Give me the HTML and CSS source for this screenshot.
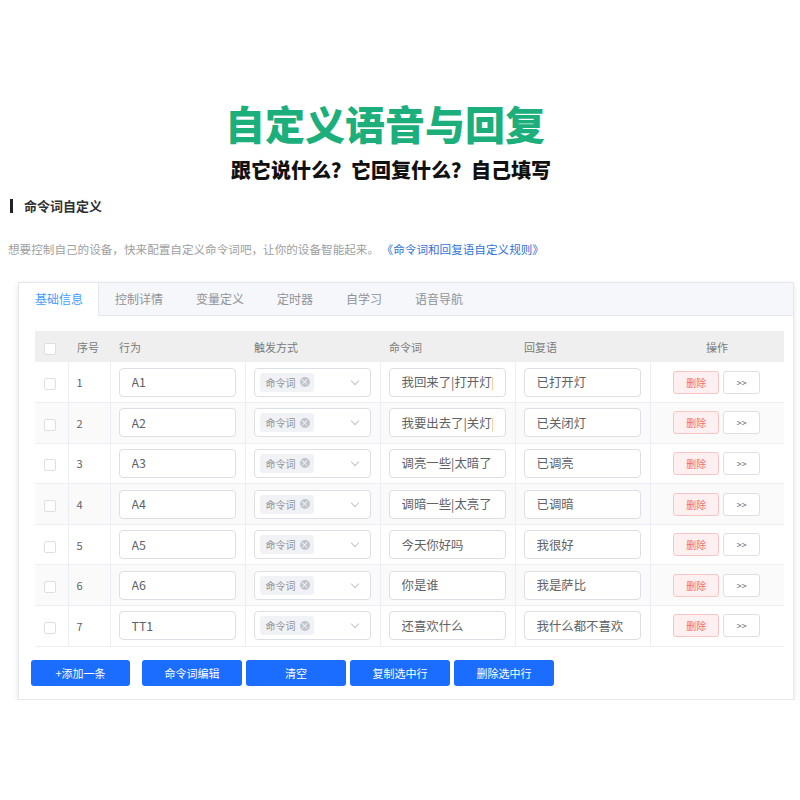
FILE: index.html
```html
<!DOCTYPE html>
<html lang="zh-CN">
  <head>
    <meta charset="UTF-8" />
    <title>自定义语音与回复</title>
    <link rel="stylesheet" href="styles.css">
  </head>
  <body>
    <div class="hero">
      <h1>自定义语音与回复</h1>
      <p class="sub">跟它说什么？它回复什么？自己填写</p>
    </div>
    <h2 class="sec-title">命令词自定义</h2>
    <p class="desc">想要控制自己的设备，快来配置自定义命令词吧，让你的设备智能起来。 <a href="#">《命令词和回复语自定义规则》</a></p>

    <div class="card">
      <div class="tabs">
        <span class="tab active">基础信息</span>
        <span class="tab">控制详情</span>
        <span class="tab">变量定义</span>
        <span class="tab">定时器</span>
        <span class="tab">自学习</span>
        <span class="tab">语音导航</span>
      </div>
      <div class="card-body">
        <table class="grid">
          <colgroup>
            <col class="w-cb"><col class="w-no"><col class="w-col"><col class="w-col"><col class="w-col"><col class="w-col"><col class="w-op">
          </colgroup>
          <tr class="head">
            <th><span class="cb"></span></th>
            <th>序号</th>
            <th>行为</th>
            <th>触发方式</th>
            <th>命令词</th>
            <th>回复语</th>
            <th class="c">操作</th>
          </tr>
          <tr>
            <td><span class="cb"></span></td><td>1</td>
            <td><input class="ipt" value="A1" readonly></td>
            <td><div class="sel"><span class="tag">命令词<i class="x">×</i></span><span class="arrow"></span></div></td>
            <td><input class="ipt" value="我回来了|打开灯|很黑" readonly></td>
            <td><input class="ipt" value="已打开灯" readonly></td>
            <td class="c"><button class="del">删除</button><button class="more">&gt;&gt;</button></td>
          </tr>
          <tr class="alt">
            <td><span class="cb"></span></td><td>2</td>
            <td><input class="ipt" value="A2" readonly></td>
            <td><div class="sel"><span class="tag">命令词<i class="x">×</i></span><span class="arrow"></span></div></td>
            <td><input class="ipt" value="我要出去了|关灯|谢谢" readonly></td>
            <td><input class="ipt" value="已关闭灯" readonly></td>
            <td class="c"><button class="del">删除</button><button class="more">&gt;&gt;</button></td>
          </tr>
          <tr>
            <td><span class="cb"></span></td><td>3</td>
            <td><input class="ipt" value="A3" readonly></td>
            <td><div class="sel"><span class="tag">命令词<i class="x">×</i></span><span class="arrow"></span></div></td>
            <td><input class="ipt" value="调亮一些|太暗了" readonly></td>
            <td><input class="ipt" value="已调亮" readonly></td>
            <td class="c"><button class="del">删除</button><button class="more">&gt;&gt;</button></td>
          </tr>
          <tr class="alt">
            <td><span class="cb"></span></td><td>4</td>
            <td><input class="ipt" value="A4" readonly></td>
            <td><div class="sel"><span class="tag">命令词<i class="x">×</i></span><span class="arrow"></span></div></td>
            <td><input class="ipt" value="调暗一些|太亮了" readonly></td>
            <td><input class="ipt" value="已调暗" readonly></td>
            <td class="c"><button class="del">删除</button><button class="more">&gt;&gt;</button></td>
          </tr>
          <tr>
            <td><span class="cb"></span></td><td>5</td>
            <td><input class="ipt" value="A5" readonly></td>
            <td><div class="sel"><span class="tag">命令词<i class="x">×</i></span><span class="arrow"></span></div></td>
            <td><input class="ipt" value="今天你好吗" readonly></td>
            <td><input class="ipt" value="我很好" readonly></td>
            <td class="c"><button class="del">删除</button><button class="more">&gt;&gt;</button></td>
          </tr>
          <tr class="alt">
            <td><span class="cb"></span></td><td>6</td>
            <td><input class="ipt" value="A6" readonly></td>
            <td><div class="sel"><span class="tag">命令词<i class="x">×</i></span><span class="arrow"></span></div></td>
            <td><input class="ipt" value="你是谁" readonly></td>
            <td><input class="ipt" value="我是萨比" readonly></td>
            <td class="c"><button class="del">删除</button><button class="more">&gt;&gt;</button></td>
          </tr>
          <tr>
            <td><span class="cb"></span></td><td>7</td>
            <td><input class="ipt" value="TT1" readonly></td>
            <td><div class="sel"><span class="tag">命令词<i class="x">×</i></span><span class="arrow"></span></div></td>
            <td><input class="ipt" value="还喜欢什么" readonly></td>
            <td><input class="ipt" value="我什么都不喜欢" readonly></td>
            <td class="c"><button class="del">删除</button><button class="more">&gt;&gt;</button></td>
          </tr>
        </table>
        <div class="actions">
          <button class="btn first">+添加一条</button>
          <button class="btn gap">命令词编辑</button>
          <button class="btn">清空</button>
          <button class="btn">复制选中行</button>
          <button class="btn">删除选中行</button>
        </div>
      </div>
    </div>
  </body>
</html>
```

FILE: styles.css
```css
*, *:before, *:after {
  box-sizing: border-box;
}
body {
  margin: 0;
  background: #fff;
  font-family: "Noto Sans CJK SC", "Noto Sans", sans-serif;
  color: #303133;
}
.hero {
  padding-top: 99px;
  text-align: center;
}
.hero h1 {
  margin: 0;
  padding-right: 30px;
  font-size: 40px;
  line-height: 48px;
  font-weight: 900;
  color: #1caf7b;
}
.hero .sub {
  margin: 10px 0 0 0;
  padding-right: 18px;
  font-size: 20px;
  line-height: 26px;
  font-weight: 900;
  color: #111;
}
.sec-title {
  margin: 16px 0 0 10px;
  padding-left: 11px;
  border-left: 3px solid #222;
  font-size: 13px;
  line-height: 14px;
  height: 14px;
  font-weight: bold;
  color: #303133;
}
.desc {
  margin: 28px 0 0 8px;
  font-size: 11.6px;
  line-height: 16px;
  color: #a0a0a0;
}
.desc a {
  color: #2f73d8;
  text-decoration: none;
}
.card {
  margin: 25px 0 0 18px;
  width: 776px;
  border: 1px solid #e4e7ed;
  box-shadow: 0 2px 6px 0 rgba(0, 0, 0, .1);
  background: #fff;
}
.tabs {
  display: flex;
  height: 33px;
  background: #f5f7fa;
  border-bottom: 1px solid #e4e7ed;
}
.tab {
  padding: 0 16px;
  line-height: 32px;
  font-size: 12px;
  color: #909399;
  border-right: 1px solid transparent;
}
.tab.active {
  background: #fff;
  color: #409eff;
  border-right: 1px solid #e4e7ed;
  height: 33px;
  padding: 0 15px 0 16px;
}
.card-body {
  padding: 15px 9px 13px 16px;
}
.grid {
  border-collapse: collapse;
  width: 749px;
  table-layout: fixed;
}
.w-cb { width: 33px; }
.w-no { width: 42px; }
.w-col { width: 135px; }
.w-op { width: 134px; }
.grid th {
  height: 31px;
  background: #efefef;
  font-size: 11px;
  font-weight: normal;
  color: #7a7a7a;
  text-align: left;
  padding: 0 9px;
}
.grid td {
  height: 40.6px;
  padding: 0 9px 0 8px;
  font-size: 11px;
  color: #606266;
  border-bottom: 1px solid #ebeef5;
  border-right: 1px solid #ebeef5;
}
.grid td:first-child, .grid th:first-child {
  padding: 0 0 0 9px;
}
.grid td:last-child {
  border-right: none;
}
.grid .c {
  text-align: center;
}
.grid tr.alt td {
  background: #fafafa;
}
.cb {
  display: inline-block;
  width: 12px;
  height: 12px;
  border: 1px solid #dcdfe6;
  border-radius: 2px;
  background: #fff;
  vertical-align: middle;
}
.ipt {
  display: block;
  width: 117px;
  height: 29px;
  padding: 0 12px;
  border: 1px solid #dcdfe6;
  border-radius: 4px;
  font-family: inherit;
  font-size: 12.4px;
  color: #606266;
  background: #fff;
  outline: none;
}
.sel {
  display: flex;
  align-items: center;
  justify-content: space-between;
  width: 117px;
  height: 29px;
  padding: 0 12px 0 5px;
  border: 1px solid #dcdfe6;
  border-radius: 4px;
  background: #fff;
}
.tag {
  display: inline-flex;
  align-items: center;
  height: 19px;
  padding: 0 4px 0 6px;
  background: #f0f2f5;
  border-radius: 3px;
  font-size: 10px;
  color: #909399;
}
.tag .x {
  display: inline-block;
  width: 10px;
  height: 10px;
  margin-left: 4px;
  border-radius: 50%;
  background: #c0c4cc;
  color: #fff;
  font-size: 9px;
  line-height: 10px;
  text-align: center;
  font-style: normal;
}
.arrow {
  width: 6px;
  height: 6px;
  border-right: 1px solid #c0c4cc;
  border-bottom: 1px solid #c0c4cc;
  transform: rotate(45deg);
  margin-top: -3px;
}
.del, .more {
  height: 23px;
  font-family: inherit;
  font-size: 10px;
  border-radius: 3px;
  vertical-align: middle;
  padding: 0;
}
.del {
  width: 46px;
  background: #fef0f0;
  border: 1px solid #fbc4c4;
  color: #f56c6c;
}
.more {
  width: 37px;
  margin-left: 4px;
  background: #fff;
  border: 1px solid #dcdfe6;
  color: #606266;
  font-size: 9px;
}
.actions {
  display: flex;
  gap: 4px;
  margin-top: 13px;
  margin-left: -4px;
}
.btn {
  width: 100px;
  height: 26px;
  padding: 0;
  border: none;
  border-radius: 3px;
  background: #1a6dff;
  color: #fff;
  font-family: inherit;
  font-size: 11px;
}
.btn.first {
  width: 99px;
}
.btn.gap {
  margin-left: 8px;
}
```
